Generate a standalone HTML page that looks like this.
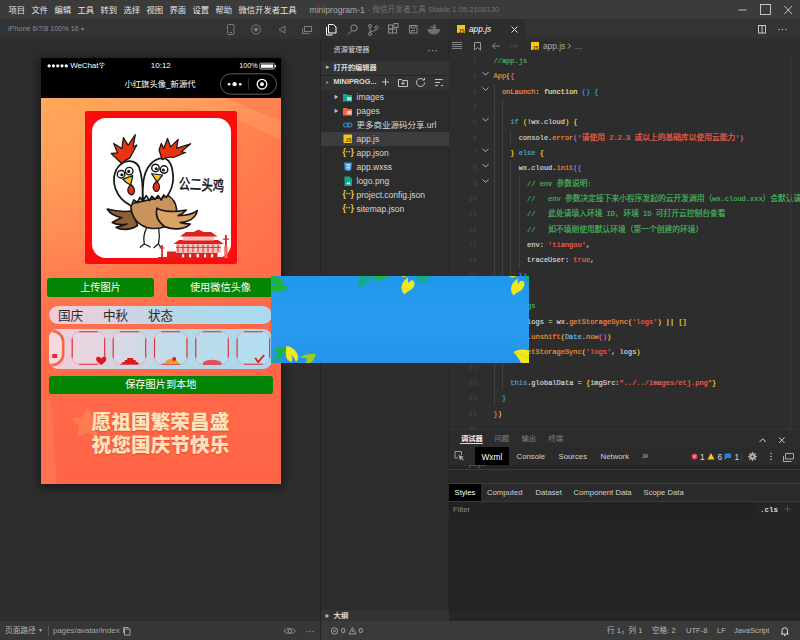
<!DOCTYPE html>
<html lang="zh">
<head>
<meta charset="utf-8">
<title>微信开发者工具</title>
<style>
*{box-sizing:border-box;margin:0;padding:0}
html,body{width:800px;height:640px;overflow:hidden;background:#2d2d2d}
body{position:relative;font-family:"Liberation Sans","Noto Sans CJK SC",sans-serif;color:#ccc;font-size:8.3px;line-height:1}
.a{position:absolute}
.t{position:absolute;white-space:nowrap;line-height:12px;height:12px}
svg{position:absolute;overflow:visible}
.mono{font-family:"Liberation Mono","Noto Sans CJK SC",monospace}
.c{color:#45b35c}.o{color:#ee8a3c}.y{color:#f5d415}.p{color:#d570d0}.b{color:#2f9fe8}.w{color:#d0d0d0}.f{color:#e8e08a}.r{color:#ee5f4a}.k{color:#4ba6dc}
.ln{position:absolute;left:493.5px;height:15.33px;line-height:15.33px;font-size:7px;white-space:pre;font-family:"Liberation Mono","Noto Sans CJK SC",monospace;-webkit-text-stroke:0.2px currentColor}
.no{position:absolute;left:455px;width:22px;text-align:right;height:15.33px;line-height:15.33px;font-size:7px;color:#444;font-family:"Liberation Mono",monospace}
.z{font-style:normal;font-size:7.75px}
.ig{position:absolute;width:1px;background:#404040}
.mi{top:4px;color:#e4e4e4;font-size:8.3px}
.fr{position:absolute;left:320px;width:129px;height:14px}
.fn{transform:translateY(0.7px);position:absolute;left:356.5px;font-size:8.5px;line-height:14px;height:14px;white-space:nowrap;color:#d6d6d6}
</style>
</head>
<body>
<!-- ===== base panels ===== -->
<div class="a" style="left:0;top:0;width:800px;height:19px;background:#3b3b3b"></div>
<div class="a" style="left:0;top:19px;width:800px;height:20px;background:#333"></div><div class="a" style="left:320px;top:19px;width:129px;height:20px;background:#303030"></div>
<div class="a" style="left:0;top:39px;width:320px;height:582px;background:#2d2d2d"></div>
<div class="a" style="left:320px;top:39px;width:129px;height:583px;background:#2c2c2c"></div><div class="a" style="left:448px;top:39px;width:1px;height:583px;background:#272727"></div>
<div class="a" style="left:449px;top:39px;width:351px;height:390px;background:#2d2d2d"></div>
<div class="a" style="left:449px;top:19px;width:76px;height:20px;background:#2d2d2d"></div>

<!-- ===== menu bar ===== -->
<div class="t mi" style="left:8.5px">项目</div>
<div class="t mi" style="left:31.5px">文件</div>
<div class="t mi" style="left:54.5px">编辑</div>
<div class="t mi" style="left:77.5px">工具</div>
<div class="t mi" style="left:100.5px">转到</div>
<div class="t mi" style="left:123.5px">选择</div>
<div class="t mi" style="left:146.5px">视图</div>
<div class="t mi" style="left:169.5px">界面</div>
<div class="t mi" style="left:192.5px">设置</div>
<div class="t mi" style="left:215.5px">帮助</div>
<div class="t mi" style="left:238.5px">微信开发者工具</div>
<div class="t" style="left:309.5px;top:4px;color:#a8a8a8;font-size:8.6px">miniprogram-1</div>
<div class="t" style="left:367.500px;top:4px;color:#727272;font-size:7.700px">- 微信开发者工具 Stable 1.05.2108130</div>
<svg style="left:736px;top:3px" width="60" height="14" viewBox="736 3 60 14" fill="none" stroke="#d0d0d0" stroke-width="0.900">
<path d="M738.5 10h8"/><rect x="760.5" y="4.5" width="10" height="10"/><path d="M784.5 6l7.5 8M792 6l-7.5 8"/>
</svg>

<!-- ===== toolbar ===== -->
<div class="t" style="left:8px;top:23px;color:#868b93;font-size:7.200px">iPhone 6/7/8 100% 16 <span style="font-size:6px">▾</span></div>
<svg style="left:225px;top:22px" width="90" height="16" viewBox="225 22 90 16" fill="none" stroke="#7c7c7c" stroke-width="1">
<rect x="227.5" y="24.5" width="6.5" height="10" rx="1"/><path d="M229.5 32.5h2.5"/>
<circle cx="256" cy="29.5" r="4.5"/><circle cx="256" cy="29.5" r="2" fill="#7c7c7c" stroke="none"/>
<path d="M279 29.5l6-3.5v7z"/>
<rect x="304.5" y="26.5" width="7" height="5"/><path d="M302.5 28.5v5h7"/>
</svg>
<svg style="left:322px;top:22px" width="122" height="16" viewBox="322 22 122 16" fill="none" stroke="#8c8c8c" stroke-width="1">
<path d="M328.5 24.500h5l2.500 2.500v6h-7.500z" stroke="#fff"/><path d="M326.500 27v8h6" stroke="#fff"/>
<circle cx="354" cy="28" r="3.200"/><path d="M351.800 30.500l-3.800 4"/>
<circle cx="370" cy="26" r="1.500"/><circle cx="370" cy="34" r="1.500"/><circle cx="376.500" cy="27.500" r="1.500"/><path d="M370 27.500v5M376.500 29c0 2.500-6.500 1.500-6.500 4"/>
<rect x="388.500" y="29" width="4" height="4"/><rect x="392.500" y="29" width="4" height="4"/><rect x="388.500" y="25" width="4" height="4"/><rect x="394" y="23.500" width="4" height="4"/>
<rect x="409.500" y="25.500" width="7.500" height="7.500"/><path d="M411.500 25.500v2.500h3.500v-2.500M411.500 33v-2.500h3.500"/>
<path d="M428 29.500h11.500c0 3-2.500 4.500-6 4.500s-5.500-2-5.500-4.500zM430 27h5.500v2.500M433 25h2v2" fill="#6e6e6e" stroke="#6e6e6e"/>
</svg>

<!-- ===== explorer ===== -->
<div class="t" style="left:333.5px;top:44px;color:#d4d4d4;font-size:7.2px">资源管理器</div>
<div class="t" style="left:427px;top:44.500px;color:#bbb;font-size:10px;letter-spacing:0.3px">···</div>
<div class="fr" style="top:61px;background:#343434"></div>
<div class="a" style="left:320px;top:75px;width:129px;height:15px;background:#333"></div><div class="a" style="left:320px;top:75px;width:129px;height:1px;background:#262626"></div>
<div class="t" style="left:325.500px;top:62px;color:#bbb;font-size:4px">▶</div>
<div class="t" style="left:333.5px;top:62px;color:#ddd;font-size:7.2px;font-weight:bold">打开的编辑器</div>
<div class="t" style="left:325px;top:76.500px;color:#bbb;font-size:4px">▼</div>
<div class="t" style="left:333.5px;top:76px;color:#ddd;font-size:7.3px;font-weight:bold">MINIPROG...</div>
<svg style="left:380px;top:76px" width="66" height="13" viewBox="380 76 66 13" fill="none" stroke="#c4c4c4" stroke-width="1">
<path d="M385.500 78.500v7M382 82h7"/>
<path d="M398.500 79.500h3l1 1h5v6h-9z"/><path d="M403 81.500v3.500M401.300 83.300h3.400"/>
<path d="M424.500 82.500a4 4 0 1 1-1.200-2.800M424.500 78v2h-2"/>
<path d="M435 79.500h7.500M435 82.500h5M435 85.500h3M441 85.500h2"/>
</svg>

<div class="fr" style="top:131.700px;background:#3d3d3f"></div>
<div class="t" style="left:334px;top:91px;color:#bbb;font-size:4.500px;line-height:11px">▶</div>
<div class="t" style="left:334px;top:105px;color:#bbb;font-size:4.500px;line-height:11px">▶</div>
<svg style="left:342px;top:90.700px" width="12" height="124" viewBox="342 90 12 124" fill="none">
<!-- images folder -->
<path d="M343 93h3.500l1 1h4.500v6.500h-9z" fill="#17a589"/><rect x="347" y="96" width="4.500" height="3.500" fill="#a5e4d6"/>
<!-- pages folder -->
<path d="M343 107h3.500l1 1h4.500v6.500h-9z" fill="#f0683c"/><rect x="347" y="110" width="4.500" height="3.500" fill="#fbc9b5"/>
<!-- link -->
<rect x="343.500" y="122" width="5" height="4" rx="2" stroke="#3a94e0" stroke-width="1"/><rect x="347" y="122" width="5" height="4" rx="2" stroke="#3a94e0" stroke-width="1"/>
<!-- js -->
<rect x="343.500" y="133.500" width="8.500" height="8.500" fill="#f5c518"/>
<!-- json braces -->
<!-- wxss -->
<path d="M344 161.500h8l-0.800 7.500-3.200 1-3.200-1z" fill="#3a94e0"/><path d="M346 163.500h4l-0.200 1.500h-3.600M346.300 166.500h3.400l-0.200 1.300-1.500 0.500-1.500-0.500" stroke="#fff" stroke-width="0.700"/>
<!-- png -->
<path d="M344.500 175.500h5l2.500 2.500v7h-7.500z" fill="#17a589"/><path d="M346 183l1.500-2 1 1 1.500-1.500v3z" fill="#c9f0e6"/>
</svg>
<div class="t" style="left:345.500px;top:136.200px;color:#5a4500;font-size:5px;font-weight:bold;line-height:8px;height:8px">JS</div>
<div class="t" style="left:342.500px;top:146px;color:#f0c23c;font-size:9px;font-weight:bold;letter-spacing:-0.500px">{··}</div>
<div class="t" style="left:342.500px;top:188px;color:#f0c23c;font-size:9px;font-weight:bold;letter-spacing:-0.500px">{··}</div>
<div class="t" style="left:342.500px;top:202px;color:#f0c23c;font-size:9px;font-weight:bold;letter-spacing:-0.500px">{··}</div>
<div class="fn" style="top:89px">images</div>
<div class="fn" style="top:103px">pages</div>
<div class="fn" style="top:117px">更多商业源码分享.url</div>
<div class="fn" style="top:131px">app.js</div>
<div class="fn" style="top:145px">app.json</div>
<div class="fn" style="top:159px">app.wxss</div>
<div class="fn" style="top:173px">logo.png</div>
<div class="fn" style="top:187px">project.config.json</div>
<div class="fn" style="top:201px">sitemap.json</div>
<!-- outline -->
<div class="a" style="left:320px;top:610px;width:129px;height:12px;background:#333"></div>
<div class="t" style="left:325px;top:610px;color:#bbb;font-size:4.500px">▶</div>
<div class="t" style="left:333.500px;top:610px;color:#ddd;font-size:7.400px;font-weight:bold">大纲</div>

<!-- ===== editor ===== -->
<div class="a" style="left:456.500px;top:24.500px;width:8.500px;height:8.500px;background:#f5c518"></div>
<div class="t" style="left:458.500px;top:26.500px;color:#5a4500;font-size:5px;font-weight:bold;line-height:8px;height:8px">JS</div>
<div class="t" style="left:469px;top:23px;color:#fff;font-size:8.300px;font-style:italic">app.js</div>
<svg style="left:510px;top:25px" width="9" height="9" viewBox="510 25 9 9" fill="none" stroke="#ddd" stroke-width="1"><path d="M511.500 26.500l6 6M517.500 26.500l-6 6"/></svg>
<svg style="left:756px;top:24px" width="34" height="11" viewBox="756 24 34 11" fill="none" stroke="#c8c8c8" stroke-width="1"><rect x="758.500" y="25.500" width="7" height="7.500"/><path d="M762 25.500v7.500"/><circle cx="779" cy="29.500" r="0.700" fill="#c8c8c8" stroke="none"/><circle cx="782.500" cy="29.500" r="0.700" fill="#c8c8c8" stroke="none"/><circle cx="786" cy="29.500" r="0.700" fill="#c8c8c8" stroke="none"/></svg>
<svg style="left:450px;top:40px" width="135" height="13" viewBox="450 40 135 13" fill="none" stroke="#9a9a9a" stroke-width="1"><path d="M452 42.500h10M452 44.500h10M452 46.500h10M452 48.500h10" stroke-width="0.800"/><path d="M474.500 42.500h6v7.500l-3-2.500-3 2.500z"/><path d="M500 46h-7.500M495.500 43l-3 3 3 3" stroke="#8a8a8a"/><path d="M510 46h7.500M514.500 43l3 3-3 3" stroke="#505050"/><path d="M568 43.500l2.500 2.500-2.500 2.500" stroke="#aaa"/></svg>
<div class="a" style="left:530.500px;top:41.500px;width:8.500px;height:8.500px;background:#f5c518"></div>
<div class="t" style="left:532.500px;top:43.500px;color:#5a4500;font-size:5px;font-weight:bold;line-height:8px;height:8px">JS</div>
<div class="t" style="left:543px;top:40px;color:#aaa;font-size:8.300px">app.js</div>
<div class="t" style="left:574.500px;top:40px;color:#999;font-size:8.300px">…</div>
<div class="no" style="top:53.99px">1</div>
<div class="ln" style="top:53.99px"><span class="c">//app.js</span></div>
<div class="no" style="top:69.32px">2</div>
<div class="ln" style="top:69.32px"><span class="o">App</span><span class="y">(</span><span class="p">{</span></div>
<div class="no" style="top:84.65px">3</div>
<div class="ln" style="top:84.65px"><span class="w">  </span><span class="o">onLaunch</span><span class="w">: </span><span class="f">function</span><span class="w"> </span><span class="b">()</span><span class="w"> </span><span class="b">{</span></div>
<div class="no" style="top:99.98px">4</div>
<div class="no" style="top:115.31px">5</div>
<div class="ln" style="top:115.31px"><span class="w">    </span><span class="k">if</span><span class="w"> </span><span class="y">(</span><span class="w">!wx.cloud</span><span class="y">)</span><span class="w"> </span><span class="y">{</span></div>
<div class="no" style="top:130.64px">6</div>
<div class="ln" style="top:130.64px"><span class="w">      console.</span><span class="o">error</span><span class="p">(</span><span class="r">'<i class="z">请使用</i> 2.2.3 <i class="z">或以上的基础库以使用云能力</i>'</span><span class="p">)</span></div>
<div class="no" style="top:145.96px">7</div>
<div class="ln" style="top:145.96px"><span class="w">    </span><span class="y">}</span><span class="w"> </span><span class="k">else</span><span class="w"> </span><span class="y">{</span></div>
<div class="no" style="top:161.30px">8</div>
<div class="ln" style="top:161.30px"><span class="w">      wx.cloud.</span><span class="o">init</span><span class="p">(</span><span class="b">{</span></div>
<div class="no" style="top:176.62px">9</div>
<div class="ln" style="top:176.62px"><span class="w">        </span><span class="c">// env <i class="z">参数说明</i>:</span></div>
<div class="no" style="top:191.96px">10</div>
<div class="ln" style="top:191.96px"><span class="w">        </span><span class="c">//   env <i class="z">参数决定接下来小程序发起的云开发调用（</i>wx.cloud.xxx<i class="z">）会默认请求到哪个云环境的资源</i></span></div>
<div class="no" style="top:207.29px">11</div>
<div class="ln" style="top:207.29px"><span class="w">        </span><span class="c">//   <i class="z">此处请填入环境</i> ID, <i class="z">环境</i> ID <i class="z">可打开云控制台查看</i></span></div>
<div class="no" style="top:222.62px">12</div>
<div class="ln" style="top:222.62px"><span class="w">        </span><span class="c">//   <i class="z">如不填则使用默认环境（第一个创建的环境）</i></span></div>
<div class="no" style="top:237.95px">13</div>
<div class="ln" style="top:237.95px"><span class="w">        env: </span><span class="r">'tiangou'</span><span class="w">,</span></div>
<div class="no" style="top:253.28px">14</div>
<div class="ln" style="top:253.28px"><span class="w">        traceUser: </span><span class="r">true</span><span class="w">,</span></div>
<div class="no" style="top:268.60px">15</div>
<div class="ln" style="top:268.60px"><span class="w">      </span><span class="b">}</span><span class="p">)</span></div>
<div class="no" style="top:283.93px">16</div>
<div class="ln" style="top:283.93px"><span class="w">    </span><span class="y">}</span></div>
<div class="no" style="top:299.27px">17</div>
<div class="ln" style="top:299.27px"><span class="w">    </span><span class="c">//logs</span></div>
<div class="no" style="top:314.59px">18</div>
<div class="ln" style="top:314.59px"><span class="w">    </span><span class="k">var</span><span class="w"> logs </span><span class="f">=</span><span class="w"> wx.</span><span class="o">getStorageSync</span><span class="y">(</span><span class="r">'logs'</span><span class="y">)</span><span class="w"> </span><span class="f">||</span><span class="w"> </span><span class="y">[]</span></div>
<div class="no" style="top:329.92px">19</div>
<div class="ln" style="top:329.92px"><span class="w">    logs.</span><span class="o">unshift</span><span class="y">(</span><span class="k" style="color:#68b8e8">Date</span><span class="w">.</span><span class="o">now</span><span class="p">()</span><span class="y">)</span></div>
<div class="no" style="top:345.25px">20</div>
<div class="ln" style="top:345.25px"><span class="w">    wx.</span><span class="o">setStorageSync</span><span class="y">(</span><span class="r">'logs'</span><span class="w">, logs</span><span class="y">)</span></div>
<div class="no" style="top:360.59px">21</div>
<div class="no" style="top:375.91px">22</div>
<div class="ln" style="top:375.91px"><span class="w">    </span><span class="k">this</span><span class="w">.globalData </span><span class="f">=</span><span class="w"> </span><span class="y">{</span><span class="w">imgSrc:</span><span class="r">"../../images/etj.png"</span><span class="y">}</span></div>
<div class="no" style="top:391.24px">23</div>
<div class="ln" style="top:391.24px"><span class="w">  </span><span class="b">}</span></div>
<div class="no" style="top:406.57px">24</div>
<div class="ln" style="top:406.57px"><span class="p">}</span><span class="y">)</span></div>
<div class="no" style="top:421.90px">25</div>
<svg style="left:0;top:0" width="800" height="640" viewBox="0 0 800 640" fill="none" stroke="#c0c0c0" stroke-width="0.900"><path d="M482.500 72.12l3 3 3-3"/><path d="M482.500 87.45l3 3 3-3"/><path d="M482.500 118.11l3 3 3-3"/><path d="M482.500 148.76l3 3 3-3"/><path d="M482.500 164.10l3 3 3-3"/><path d="M482.500 179.42l3 3 3-3"/></svg>
<div class="ig" style="left:493.5px;top:83.75px;height:321.93px"></div>
<div class="ig" style="left:502.0px;top:99.08px;height:291.27px"></div>
<div class="ig" style="left:510.3px;top:129.74px;height:15.33px"></div>
<div class="ig" style="left:510.3px;top:160.40px;height:122.64px"></div>
<div class="ig" style="left:518.7px;top:175.72px;height:91.98px"></div>
<div class="a" style="left:790px;top:53px;width:1px;height:376px;background:#3a3a3a"></div>

<!-- ===== debugger panel ===== -->
<div class="a" style="left:449px;top:429px;width:351px;height:192px;background:#252525"></div>
<div class="a" style="left:449px;top:429px;width:351px;height:1px;background:#363636"></div>
<div class="a" style="left:449px;top:430px;width:351px;height:17px;background:#2c2c2c"></div>
<div class="t" style="left:461px;top:433px;color:#f0f0f0;font-size:7.300px;font-weight:bold">调试器</div>
<div class="a" style="left:460px;top:442.500px;width:23px;height:1px;background:#ddd"></div>
<div class="t" style="left:494.500px;top:433px;color:#808080;font-size:7.300px">问题</div>
<div class="t" style="left:521.500px;top:433px;color:#808080;font-size:7.300px">输出</div>
<div class="t" style="left:548.500px;top:433px;color:#808080;font-size:7.300px">终端</div>
<svg style="left:760px;top:435px" width="25" height="10" viewBox="775 435 25 10" fill="none" stroke="#d0d0d0" stroke-width="1"><path d="M774.500 442l3.200-3.200 3.200 3.200"/><path d="M797.500 437.500l5.500 5.500M803 437.500l-5.500 5.500" transform="translate(-3.500 0)"/></svg>
<!-- devtools tab row -->
<div class="a" style="left:449px;top:447px;width:351px;height:18px;background:#2b2b2b"></div>
<div class="a" style="left:475px;top:447px;width:34px;height:18px;background:#000"></div>
<svg style="left:453px;top:450px" width="12" height="12" viewBox="453 450 12 12" fill="none" stroke="#aaa" stroke-width="0.900"><path d="M461.500 455v-3.500h-6.500v6.500h3"/><path d="M458.500 455l1.500 5.500 1-2 2 2 0.800-0.800-2-2 2-1z" fill="#aaa" stroke="none"/></svg>
<div class="t" style="left:481.500px;top:451px;color:#fff;font-size:8.300px">Wxml</div>
<div class="t" style="left:516.500px;top:451px;color:#d0d0d0;font-size:7.800px">Console</div>
<div class="t" style="left:558.500px;top:451px;color:#d0d0d0;font-size:7.800px">Sources</div>
<div class="t" style="left:600.500px;top:451px;color:#d0d0d0;font-size:7.800px">Network</div>
<div class="t" style="left:642px;top:449px;color:#aaa;font-size:11.500px">»</div>
<svg style="left:690px;top:450px" width="110" height="13" viewBox="690 450 110 13" fill="none">
<circle cx="694.500" cy="456.500" r="3" fill="#e8384f"/><path d="M693.300 455.300l2.400 2.400M695.700 455.300l-2.400 2.400" stroke="#fff" stroke-width="0.700"/>
<path d="M711 453l3.500 6.500h-7z" fill="#f5c518"/>
<path d="M724.500 453.500h6.500v4.500h-4l-2.500 2z" fill="#2b7de0"/>
<path d="M741.500 451.500v10" stroke="#3a3a3a" stroke-width="1"/>
<g stroke="#b0b0b0"><circle cx="752.500" cy="456.500" r="2.300" stroke-width="1.800"/><path d="M752.500 452v9M748 456.500h9M749.300 453.300l6.400 6.400M755.700 453.300l-6.400 6.400" stroke-width="1.200"/></g><circle cx="752.500" cy="456.500" r="1.100" fill="#2b2b2b"/>
<circle cx="771" cy="453.500" r="0.800" fill="#bbb"/><circle cx="771" cy="456.500" r="0.800" fill="#bbb"/><circle cx="771" cy="459.500" r="0.800" fill="#bbb"/>
<path d="M785.500 453.500h8v5.500h-8zM783.500 456v5.500h8" stroke="#aaa" stroke-width="1"/>
</svg>
<div class="t" style="left:700px;top:451px;color:#ddd;font-size:8.300px">1</div>
<div class="t" style="left:717.500px;top:451px;color:#ddd;font-size:8.300px">6</div>
<div class="t" style="left:734.500px;top:451px;color:#ddd;font-size:8.300px">1</div>
<!-- wxml content sliver -->
<div class="a" style="left:449px;top:465px;width:351px;height:4px;background:#242424;overflow:hidden"><div class="t mono" style="left:11px;top:-7.500px;color:#2a8ad8;font-size:7px">&lt;/page&gt;</div></div>
<div class="a" style="left:449px;top:469px;width:351px;height:1px;background:#3c3c3c"></div>
<div class="a" style="left:449px;top:470px;width:351px;height:13px;background:#282828"></div>
<div class="a" style="left:449px;top:483px;width:351px;height:1px;background:#3c3c3c"></div>
<div class="a" style="left:449px;top:484px;width:351px;height:17px;background:#2b2b2b"></div>
<div class="a" style="left:449px;top:484px;width:32px;height:17px;background:#000"></div>
<div class="t" style="left:454.500px;top:486.500px;color:#fff;font-size:7.700px">Styles</div>
<div class="t" style="left:487px;top:486.500px;color:#d0d0d0;font-size:7.700px">Computed</div>
<div class="t" style="left:535.500px;top:486.500px;color:#d0d0d0;font-size:7.700px">Dataset</div>
<div class="t" style="left:573.500px;top:486.500px;color:#d0d0d0;font-size:7.700px">Component Data</div>
<div class="t" style="left:643.500px;top:486.500px;color:#d0d0d0;font-size:7.700px">Scope Data</div>
<div class="a" style="left:449px;top:501px;width:351px;height:1px;background:#3a3a3a"></div>
<div class="a" style="left:449px;top:502px;width:351px;height:13px;background:#252525"></div>
<div class="a" style="left:449px;top:503px;width:306px;height:12px;background:#212121"></div>
<div class="t" style="left:453px;top:503.500px;color:#888;font-size:7.700px">Filter</div>
<div class="t mono" style="left:760px;top:503.500px;color:#d8d8d8;font-size:7.500px;font-weight:bold">.cls</div>
<svg style="left:782px;top:504px" width="14" height="12" viewBox="782 504 14 12" fill="none" stroke="#555" stroke-width="0.900"><path d="M787.500 506v6M784.500 509h6"/></svg>
<div class="a" style="left:449px;top:515px;width:351px;height:95px;background:#232323"></div>
<div class="a" style="left:449px;top:610px;width:351px;height:11px;background:#262626"></div>

<!-- ===== bottom bars ===== -->
<div class="a" style="left:0;top:621px;width:320px;height:19px;background:#373737"></div>
<div class="a" style="left:320px;top:621px;width:480px;height:19px;background:#3a3a3a"></div>
<div class="a" style="left:320px;top:39px;width:1px;height:601px;background:#242424"></div>
<div class="t" style="left:5px;top:625px;color:#b4b4b4;font-size:7.700px">页面路径 <span style="font-size:5.500px;position:relative;top:-1px;left:1px">▾</span></div>
<div class="a" style="left:48px;top:626px;width:1px;height:10px;background:#555"></div>
<div class="t" style="left:53px;top:625px;color:#a8a8a8;font-size:7.900px">pages/avatar/index</div>
<svg style="left:122px;top:625px" width="10" height="11" viewBox="122 625 10 11" fill="none" stroke="#aaa" stroke-width="0.900"><rect x="124.500" y="629" width="5.500" height="6"/><path d="M123.500 633v-5.500h5"/></svg>
<svg style="left:283px;top:625px" width="34" height="12" viewBox="283 625 34 12" fill="none" stroke="#909090" stroke-width="0.900"><path d="M284 631c2-3.200 9.500-3.200 11.500 0c-2 3.200-9.500 3.200-11.500 0z"/><circle cx="289.800" cy="631" r="1.700"/><circle cx="307" cy="631.500" r="0.700" fill="#909090" stroke="none"/><circle cx="310" cy="631.500" r="0.700" fill="#909090" stroke="none"/><circle cx="313" cy="631.500" r="0.700" fill="#909090" stroke="none"/></svg>
<svg style="left:329px;top:625px" width="36" height="12" viewBox="329 625 36 12" fill="none" stroke="#b0b0b0" stroke-width="0.800"><circle cx="334.500" cy="631" r="3.200"/><path d="M333.200 629.700l2.600 2.600M335.800 629.700l-2.600 2.600"/><path d="M352.500 627.500l3.500 6.500h-7z"/><path d="M352.500 630v2"/></svg>
<div class="t" style="left:341px;top:625px;color:#c0c0c0;font-size:7.800px">0</div>
<div class="t" style="left:358.500px;top:625px;color:#c0c0c0;font-size:7.800px">0</div>
<div class="t" style="left:607px;top:625px;color:#b8b8b8;font-size:7.600px">行 1，列 1</div>
<div class="t" style="left:652px;top:625px;color:#b8b8b8;font-size:7.600px">空格: 2</div>
<div class="t" style="left:686px;top:625px;color:#b8b8b8;font-size:7.600px">UTF-8</div>
<div class="t" style="left:717px;top:625px;color:#b8b8b8;font-size:7.600px">LF</div>
<div class="t" style="left:734px;top:625px;color:#b8b8b8;font-size:7.600px">JavaScript</div>
<svg style="left:778px;top:625px" width="14" height="12" viewBox="778 625 14 12" fill="none" stroke="#e0e0e0" stroke-width="1"><path d="M781 634h7.500M782 634v-3.500a2.700 2.700 0 0 1 5.500 0v3.500"/><path d="M784 635.500h1.500" stroke-width="1.200"/></svg>

<!-- ===== simulator phone ===== -->
<div class="a" style="left:40.500px;top:57.500px;width:240px;height:426.500px;background:#ff6a48;box-shadow:0 2px 9px 2px rgba(0,0,0,0.45)"></div>
<svg style="left:40.500px;top:98px" width="240" height="386" viewBox="40.500 98 240 386">
<defs>
<linearGradient id="bgv" x1="0" y1="0" x2="0" y2="1"><stop offset="0" stop-color="#ff9a52"/><stop offset="0.300" stop-color="#ff8150"/><stop offset="0.600" stop-color="#ff6e4b"/><stop offset="1" stop-color="#ff6347"/></linearGradient>
<radialGradient id="bgh" gradientUnits="userSpaceOnUse" cx="30" cy="120" r="190"><stop offset="0" stop-color="#ffb060" stop-opacity="0.650"/><stop offset="0.500" stop-color="#ffb060" stop-opacity="0.350"/><stop offset="1" stop-color="#ffb060" stop-opacity="0"/></radialGradient>
<linearGradient id="bgr" x1="0" y1="0" x2="1" y2="0"><stop offset="0.500" stop-color="#ff5a46" stop-opacity="0"/><stop offset="1" stop-color="#ff5a46" stop-opacity="0.400"/></linearGradient>
<linearGradient id="sw1" x1="0" y1="0" x2="1" y2="1"><stop offset="0" stop-color="#ffa862"/><stop offset="1" stop-color="#ff8a58"/></linearGradient>
</defs>
<rect x="40.500" y="98" width="240" height="386" fill="url(#bgv)"/>
<rect x="40.500" y="98" width="240" height="300" fill="url(#bgh)"/>
<rect x="40.500" y="98" width="240" height="300" fill="url(#bgr)"/>
<path d="M96 98c30 14 70 6 105 12s60 22 79.500 30v-42z" fill="url(#sw1)" opacity="0.850"/>
<path d="M225 98c18 6 38 18 55.500 22v-22z" fill="#ff7d4f" opacity="0.800"/>
<path d="M40.500 400h10l6 84h-16z" fill="#ff8258" opacity="0.450"/>
<path d="M87 407l5 10 11 1.500-8 8 2 11-10-5-10 5 2-11-8-8 11-1.500z" fill="#ff8a55" opacity="0.600"/>
</svg>
<!-- status + nav -->
<div class="a" style="left:40.500px;top:57.500px;width:240px;height:40.700px;background:#000"></div>
<svg style="left:40.500px;top:57.500px" width="240" height="41" viewBox="40.500 57.500 240 41" fill="none">
<g fill="#fff"><circle cx="48.600" cy="65.300" r="1.600"/><circle cx="52.900" cy="65.300" r="1.600"/><circle cx="57.200" cy="65.300" r="1.600"/><circle cx="61.500" cy="65.300" r="1.600"/><circle cx="65.800" cy="65.300" r="1.600"/></g>
<path d="M98.300 63.800a4.300 4.300 0 0 1 6 0M99.500 65.300a2.700 2.700 0 0 1 3.600 0" stroke="#fff" stroke-width="0.800"/><circle cx="101.300" cy="66.900" r="0.800" fill="#fff"/>
<rect x="259.300" y="62.700" width="14.500" height="5.800" rx="1" stroke="#fff" stroke-width="0.700"/><rect x="260.500" y="63.900" width="12.100" height="3.400" fill="#fff"/><rect x="274.500" y="64.600" width="1.100" height="2" fill="#fff"/>
<rect x="220" y="73.300" width="56" height="20.400" rx="10.200" stroke="#a0a0a0" stroke-width="0.600"/>
<path d="M248 78v11" stroke="#444" stroke-width="0.700"/>
<g fill="#fff"><circle cx="228.600" cy="83.700" r="1.300"/><circle cx="234.100" cy="83.700" r="2.100"/><circle cx="239.700" cy="83.700" r="1.300"/><circle cx="261.500" cy="83.700" r="1.900"/></g>
<circle cx="261.500" cy="83.700" r="4.800" stroke="#fff" stroke-width="1.300"/>
</svg>
<div class="t" style="left:70.200px;top:59.500px;color:#fff;font-size:8px;letter-spacing:-0.100px">WeChat</div>
<div class="t" style="left:150.800px;top:59.500px;color:#fff;font-size:8px">10:12</div>
<div class="t" style="left:239.300px;top:59.800px;color:#fff;font-size:7.200px">100%</div>
<div class="t" style="left:124.500px;top:78px;color:#fff;font-size:8.300px">小红旗头像_新源代</div>
<!-- avatar -->
<div class="a" style="left:84.600px;top:110.700px;width:152.200px;height:153.600px;background:#fb0d0d;border-radius:2px"></div>
<div class="a" style="left:91.600px;top:118.300px;width:139.200px;height:140.200px;background:#fff;border-radius:14px"></div>
<svg style="left:80px;top:105px" width="165" height="165" viewBox="80 105 165 165" fill="none" stroke-linejoin="round" stroke-linecap="round">
<g transform="translate(100 185) scale(0.125)" stroke="#161616" stroke-width="13">
<path d="M262 208C200 215 120 210 58 192C80 230 120 250 175 262C150 270 120 285 98 300C130 318 170 322 215 312C190 322 150 335 128 338C170 365 250 360 300 325Z" fill="#8f6038"/>
<path d="M372 345C350 390 345 430 355 470M355 470L322 498M355 472L402 496M470 350C478 400 475 440 468 470M468 470L432 500M468 472L484 496" stroke-width="10"/>
<path d="M250 150C236 250 310 340 420 348C540 352 620 280 612 190C606 140 580 105 545 85Z" fill="#c9935c"/>
<path d="M455 185C500 215 600 220 690 200C670 225 650 235 625 245C680 245 740 235 778 205C765 270 700 300 640 300C670 310 700 312 722 312C690 350 600 365 520 335C470 300 440 250 455 185Z" fill="#dba467"/>
</g>
<g transform="translate(100 125) scale(0.15625)" stroke="#161616" stroke-width="11">
<path d="M150 240C95 270 75 340 100 410C118 455 150 490 185 508L200 520L216 480L240 496L256 464L272 484C275 420 272 330 250 270C235 235 195 220 150 240Z" fill="#fff"/>
<path d="M400 212C340 215 290 270 278 360C272 410 272 450 276 484L296 452L316 484L332 456L352 476L372 452L392 480L408 448L424 464L440 440C465 400 475 340 462 280C452 240 430 212 400 212Z" fill="#fff"/>
<path d="M140 248L72 182L112 178L88 118L140 150L150 80L180 130L226 62L212 140L236 128L190 212Q160 222 140 248Z" fill="#ea3410" stroke-width="8"/>
<path d="M398 222L378 160L392 118L408 150L432 86L452 140L500 92L490 150L580 120L520 172L548 176L470 208Q430 200 398 222Z" fill="#ea3410" stroke-width="8"/>
<g fill="#fff" stroke-width="9"><circle cx="135" cy="315" r="24"/><circle cx="187" cy="295" r="24"/><circle cx="355" cy="275" r="24"/><circle cx="410" cy="285" r="24"/></g>
<g fill="#161616" stroke="none"><circle cx="140" cy="318" r="10"/><circle cx="184" cy="297" r="10"/><circle cx="360" cy="280" r="10"/><circle cx="405" cy="288" r="10"/></g>
<path d="M146 346L210 324L196 384L166 366Z" fill="#f7c71c" stroke-width="8"/>
<path d="M196 380C218 396 228 420 216 438S178 442 178 416C178 400 188 394 196 380Z" fill="#e8300e" stroke-width="8"/>
<path d="M330 312L400 320L366 364Z" fill="#f7c71c" stroke-width="8"/>
<path d="M362 360C382 378 386 402 374 418S338 420 340 394C341 378 352 372 362 360Z" fill="#e8300e" stroke-width="8"/>
</g>
<!-- tiananmen -->
<g fill="#e0201c" stroke="none">
<rect x="167" y="251.500" width="50.500" height="7"/><rect x="158" y="257" width="74" height="1.500"/>
<rect x="176" y="243.500" width="45" height="9.500" fill="#f6c4c0"/>
<path d="M173.500 244l5.500-4h39l6 4z"/>
<rect x="183" y="236" width="31" height="4.500" fill="#f6c4c0"/>
<path d="M180 236.500l6-4.500h25l6.500 4.500z"/>
<path d="M193.500 232l5-2.500 5 2.500z"/>
<rect x="161.200" y="245" width="1.700" height="13"/><rect x="159.500" y="247.500" width="5" height="1"/>
<rect x="225" y="235" width="1.800" height="23"/><rect x="223" y="238.500" width="6" height="1.200"/><rect x="224.300" y="246" width="3.200" height="12" fill="#ee6a64"/>
<g fill="#e0201c"><rect x="177.500" y="244.500" width="1" height="8"/><rect x="182.500" y="244.500" width="1" height="8"/><rect x="187.500" y="244.500" width="1" height="8"/><rect x="192.500" y="244.500" width="1" height="8"/><rect x="197.500" y="244.500" width="1" height="8"/><rect x="202.500" y="244.500" width="1" height="8"/><rect x="207.500" y="244.500" width="1" height="8"/><rect x="212.500" y="244.500" width="1" height="8"/><rect x="217.500" y="244.500" width="1" height="8"/><rect x="176" y="247" width="45" height="0.800"/></g>
</g>
<g fill="#fff" stroke="none"><rect x="182" y="254" width="2.200" height="3.500" rx="1"/><rect x="189" y="254" width="2.200" height="3.500" rx="1"/><rect x="196.500" y="253.700" width="2.600" height="3.800" rx="1.200"/><rect x="204" y="254" width="2.200" height="3.500" rx="1"/><rect x="211" y="254" width="2.200" height="3.500" rx="1"/></g>
<text x="178.500" y="189" fill="#111" stroke="#111" stroke-width="0.450" font-size="15" font-weight="400" font-family="'Liberation Sans','Noto Sans CJK SC',sans-serif" transform="rotate(3 178 189)" textLength="45.500" lengthAdjust="spacingAndGlyphs">公二头鸡</text>
</svg>
<!-- buttons -->
<div class="a" style="left:47px;top:278px;width:107px;height:19px;background:#048404;border-radius:3px"></div>
<div class="a" style="left:167px;top:278px;width:107px;height:19px;background:#048404;border-radius:3px"></div>
<div class="t" style="left:47px;top:281.500px;width:107px;text-align:center;color:#fff;font-size:10.200px">上传图片</div>
<div class="t" style="left:167px;top:281.500px;width:107px;text-align:center;color:#fff;font-size:10.200px">使用微信头像</div>
<!-- category strip -->
<div class="a" style="left:48.800px;top:306px;width:223.500px;height:18px;border-radius:9px;background:linear-gradient(90deg,#f4ccd6 0%,#dcd2e0 25%,#b4d8e8 60%,#a8daf0 100%)"></div>
<div class="t" style="left:58px;top:308.500px;color:#282828;font-size:12.600px;line-height:14px;height:14px">国庆</div>
<div class="t" style="left:103px;top:308.500px;color:#282828;font-size:12.600px;line-height:14px;height:14px">中秋</div>
<div class="t" style="left:148px;top:308.500px;color:#282828;font-size:12.600px;line-height:14px;height:14px">状态</div>
<!-- frames strip -->
<div class="a" style="left:48.800px;top:329px;width:223.500px;height:40px;border-radius:9px;background:linear-gradient(90deg,#f4ccd6 0%,#dcd2e0 25%,#b4d8e8 60%,#a8daf0 100%);overflow:hidden">
<svg style="left:0;top:0" width="224" height="40" viewBox="48.800 329 224 40" fill="none">
<g stroke="#dc3034" stroke-width="1.100" fill="none">
<rect x="33" y="331" width="30" height="34" rx="11" stroke="#f06848" stroke-width="2.600" fill="rgba(255,255,255,0.250)"/>
<rect x="72.0" y="331.8" width="32.5" height="32.5" rx="7" stroke="#e86068" stroke-width="0.700" stroke-opacity="0.450" fill="rgba(255,255,255,0.120)"/>
<path d="M79.0 331.8h18.5M79.0 364.3h18.5M72.0 338.3v19.5M104.5 338.3v19.5"/>
<rect x="113.0" y="331.8" width="32.5" height="32.5" rx="7" stroke="#e86068" stroke-width="0.700" stroke-opacity="0.450" fill="rgba(255,255,255,0.120)"/>
<path d="M120.0 331.8h18.5M120.0 364.3h18.5M113.0 338.3v19.5M145.5 338.3v19.5"/>
<rect x="154.3" y="331.8" width="32.5" height="32.5" rx="7" stroke="#e86068" stroke-width="0.700" stroke-opacity="0.450" fill="rgba(255,255,255,0.120)"/>
<path d="M161.3 331.8h18.5M161.3 364.3h18.5M154.3 338.3v19.5M186.8 338.3v19.5"/>
<rect x="195.6" y="331.8" width="32.5" height="32.5" rx="7" stroke="#e86068" stroke-width="0.700" stroke-opacity="0.450" fill="rgba(255,255,255,0.120)"/>
<path d="M202.6 331.8h18.5M202.6 364.3h18.5M195.6 338.3v19.5M228.1 338.3v19.5"/>
<rect x="236.9" y="331.8" width="32.5" height="32.5" rx="7" stroke="#e86068" stroke-width="0.700" stroke-opacity="0.450" fill="rgba(255,255,255,0.120)"/>
<path d="M243.9 331.8h18.5M243.9 364.3h18.5M236.9 338.3v19.5M269.4 338.3v19.5"/>
</g>
<path d="M52 354h5v4h-5z" fill="#e8282c"/>
<path d="M101 358.500c-2-3-6-1.500-5 1.500 0.800 2.200 3.500 3.600 5 5 1.500-1.400 4.200-2.800 5-5 1-3-3-4.500-5-1.500z" fill="#e0181c"/>
<path d="M122 362h16v2h-16zM124.500 360h11v2h-11zM127 358h6v2h-6z" fill="#e0181c"/>
<path d="M166 361c2-3 8-3 11 0l2 2.500h-15z" fill="#e8a020"/><circle cx="174" cy="359" r="2" fill="#e0181c"/>
<path d="M203 362c5-3 12-3 18 0v2h-18z" fill="#e85050"/>
<path d="M255 358l3 4 6-7" stroke="#e0181c" stroke-width="1.800"/>
</svg></div>
<!-- save button -->
<div class="a" style="left:48.800px;top:375.500px;width:224px;height:18.500px;background:#048404;border-radius:3px"></div>
<div class="t" style="left:48.800px;top:378.500px;width:224px;text-align:center;color:#fff;font-size:10.200px">保存图片到本地</div>
<!-- slogan -->
<div class="t" style="left:90px;top:411.500px;width:141px;text-align:center;color:#fde2bc;font-size:19.700px;font-weight:900;line-height:21px;height:21px;text-shadow:0 1px 1.500px rgba(200,60,20,0.550)">愿祖国繁荣昌盛</div>
<div class="t" style="left:90px;top:435px;width:141px;text-align:center;color:#fde2bc;font-size:19.700px;font-weight:900;line-height:21px;height:21px;text-shadow:0 1px 1.500px rgba(200,60,20,0.550)">祝您国庆节快乐</div>

<!-- ===== floating banner ===== -->
<div class="a" style="left:271px;top:276px;width:257.500px;height:87px;background:linear-gradient(180deg,#1f98ee 0%,#2a9cf0 50%,#2494ea 100%);overflow:hidden">
<svg style="left:0;top:0" width="258" height="87" viewBox="271 276 258 87">
<path d="M271 276.500c7-1 12 3 13 8 1.500 1.500 3 2.500 4.500 3-4 3-10 5.500-17.500 4.500v-6.500c2 0.500 4 0.500 5.500-0.500-2-1-4-1.300-5.500-1.200z" fill="#1fb43c"/>
<path d="M358.500 276h12c1.500 4-1 7.500-4 8.500-3 1-5 3-6.500 5-2-4-3-9-1.500-13.500z" fill="#12a89a"/>
<path d="M372.500 276h15.500c-2 3-6 5-10 4.500-2.500-0.500-4.500-2-5.500-4.500z" fill="#1fb648"/>
<path d="M401.500 276h5c-1 1.200-3.500 1.400-5 0z" fill="#e0e020"/>
<path d="M408 277.500c-3 1.500-6.500 6-6.500 10 0 3 1.500 5 3 7 2-2.500 5-3.500 7.500-5.500 2.500-2.500 3.500-6 1.500-8-1.500-1.500-4-0.500-4.500 2.500-1-1.500-1.500-4-1-6z" fill="#f0e81c"/>
<path d="M415 276h15.500c-1 4-5 7.500-9 7.500-3.500 0-5.500-4-6.500-7.500z" fill="#12a89a"/>
<path d="M509 276h7c-1.500 2-5 2.500-7 0z" fill="#c8dc20"/>
<path d="M518 278.500c-3 1.500-7 6-7 10.500 0 2.500 1 4.500 2.500 6.500 2.500-2.500 5.500-3.500 8-5.500 2.500-2.500 4-6 2-8.500-1.500-1.500-4.500-0.500-5 2.500-1-1.500-1-4-0.500-5.500z" fill="#f0e81c"/>
<path d="M524.500 276h4.500v10c-2-2.500-4-6-4.500-10z" fill="#12a89a"/>
<path d="M272.500 352c2-3.500 8-5.500 14-4-1 5-4 9-8 10.500-2.500 0.500-5 0-6-1 2.500-1 5-3 6.500-5.500-2-0.500-4.500-0.500-6.500 0z" fill="#1fb43c"/>
<path d="M286.500 346c5 0.500 10 4.500 11.500 9.500 0.500 3-0.500 5-2 6.500-1-3-2.500-6-5-7.500 1.500 2.500 2 5.500 0.500 7.500-3-0.500-5-3-5.500-6-0.500-3.500 0-7 0.500-10z" fill="#f0e81c"/>
<path d="M300 358c2-3 8-4.500 15.500-4-0.500 4-2.500 7.500-5.500 9h-5c1.500-1.500 2-3.500 1.500-5-2-0.500-4.500-0.500-6.500 0z" fill="#9ccc20"/>
<path d="M272 360.500c2-1 5 0 6.500 2.500h-6.500z" fill="#12a89a"/>
<path d="M513.500 352c4-2.800 10-3.300 15.500-1.500v12.500h-8c-2-4-4.500-8-7.500-11z" fill="#f0e81c"/><path d="M516 352.500c4 0.500 8 2 11 5" stroke="#d8d010" stroke-width="0.800" fill="none"/>
</svg></div>
</body>
</html>
